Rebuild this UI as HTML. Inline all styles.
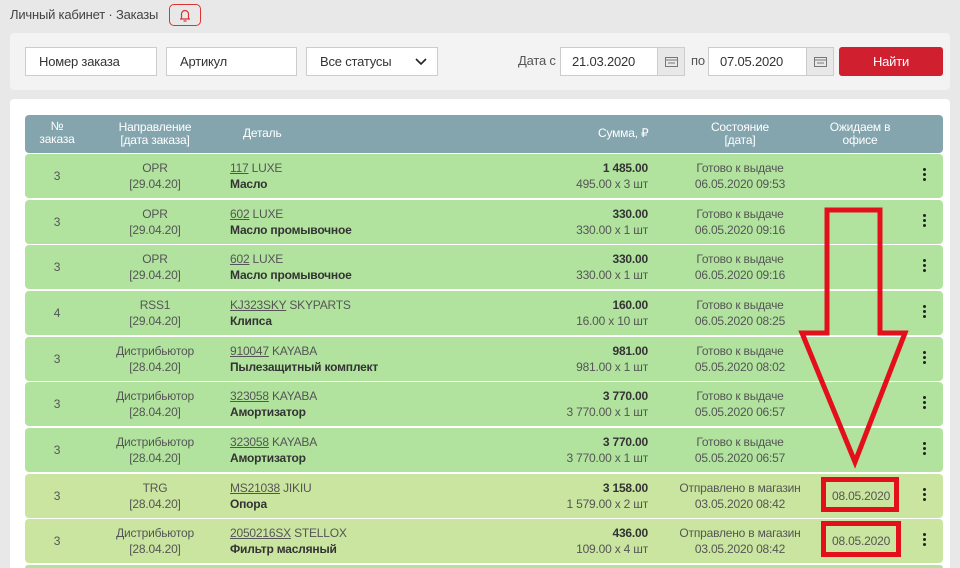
<!DOCTYPE html><html><head><meta charset="utf-8"><style>
*{box-sizing:border-box;margin:0;padding:0}
html{width:960px;height:568px;overflow:hidden}
body{width:960px;height:568px;overflow:hidden;background:#e8e8e8;font-family:"Liberation Sans",sans-serif;color:#444;font-size:12px;position:relative;letter-spacing:-0.2px}
.abs{position:absolute}
.inp{position:absolute;top:47px;height:29px;background:#fff;border:1px solid #ccc;font-size:13px;line-height:27px;padding-left:13px;color:#333}
.row{position:absolute;left:25px;width:918px;height:44px;background:#b1e39f;border-radius:4px}
.row.y{background:#c9e59f}
.row div{position:absolute;line-height:16px;font-size:12px;color:#555}
.c1{left:0;width:64px;text-align:center;top:14px}
.c2{left:70px;width:120px;text-align:center;top:6px}
.c3{left:205px;top:6px}
.c3 b{color:#333}
.c3 u{color:#555}
.c4{right:295px;top:6px;text-align:right}
.c4 b{color:#333}
.c5{left:640px;width:150px;text-align:center;top:6px}
.dots{left:898px;top:14px;width:4px}
.dots i{display:block;width:3px;height:3px;background:#222;border-radius:50%;margin-bottom:2px}
.hd{position:absolute;color:#fff;font-size:12px;line-height:13px;text-align:center}
</style></head><body>
<div class="abs" style="left:10px;top:7px;font-size:13px;color:#444">Личный кабинет · Заказы</div>
<div class="abs" style="left:169px;top:4px;width:32px;height:22px;border:1px solid #d33;border-radius:5px"><svg width="30" height="20" viewBox="0 0 30 20"><path d="M10 14h10M11.5 14V9a3.5 3.5 0 0 1 7 0v5M13.5 16h3" fill="none" stroke="#d33" stroke-width="1.2"/></svg></div>
<div class="abs" style="left:10px;top:33px;width:940px;height:57px;background:#f3f3f3;border-radius:4px"></div>
<div class="inp" style="left:25px;width:132px">Номер заказа</div>
<div class="inp" style="left:166px;width:131px">Артикул</div>
<div class="inp" style="left:306px;width:132px">Все статусы<svg class="abs" style="left:108px;top:10px" width="12" height="8"><path d="M1 1l5 5 5-5" fill="none" stroke="#222" stroke-width="1.6"/></svg></div>
<div class="abs" style="left:518px;top:53px;font-size:13px;color:#555">Дата с</div>
<div class="inp" style="left:560px;width:125px;padding-left:11px">21.03.2020</div>
<div class="abs" style="left:657px;top:47px;width:28px;height:29px;background:#e8e8e8;border:1px solid #ccc"><svg style="margin:9px 7px" width="13" height="10"><rect x=".5" y=".5" width="12" height="9" fill="none" stroke="#777"/><path d="M1 3h11M3 6h7" stroke="#777"/></svg></div>
<div class="abs" style="left:691px;top:53px;font-size:13px;color:#555">по</div>
<div class="inp" style="left:708px;width:126px;padding-left:11px">07.05.2020</div>
<div class="abs" style="left:806px;top:47px;width:28px;height:29px;background:#e8e8e8;border:1px solid #ccc"><svg style="margin:9px 7px" width="13" height="10"><rect x=".5" y=".5" width="12" height="9" fill="none" stroke="#777"/><path d="M1 3h11M3 6h7" stroke="#777"/></svg></div>
<div class="abs" style="left:839px;top:47px;width:104px;height:29px;background:#d0202f;border-radius:3px;color:#fff;font-size:13px;text-align:center;line-height:29px">Найти</div>
<div class="abs" style="left:10px;top:99px;width:940px;height:469px;background:#fff;border-radius:4px 4px 0 0"></div>
<div class="abs" style="left:25px;top:115px;width:918px;height:38px;background:#84a5ae;border-radius:4px"></div>
<div class="hd" style="left:25px;width:64px;top:120px">№<br>заказа</div>
<div class="hd" style="left:95px;width:120px;top:121px">Направление<br>[дата заказа]</div>
<div class="hd" style="left:243px;top:127px">Деталь</div>
<div class="hd" style="left:598px;top:127px">Сумма, ₽</div>
<div class="hd" style="left:680px;width:120px;top:121px">Состояние<br>[дата]</div>
<div class="hd" style="left:810px;width:100px;top:121px">Ожидаем в<br>офисе</div>

<div class="row" style="top:154px"><div class="c1">3</div><div class="c2">OPR<br>[29.04.20]</div><div class="c3"><u>117</u> LUXE<br><b>Масло</b></div><div class="c4"><b>1 485.00</b><br>495.00 x 3 шт</div><div class="c5">Готово к выдаче<br>06.05.2020 09:53</div><div class="dots"><i></i><i></i><i></i></div></div>
<div class="row" style="top:200px"><div class="c1">3</div><div class="c2">OPR<br>[29.04.20]</div><div class="c3"><u>602</u> LUXE<br><b>Масло промывочное</b></div><div class="c4"><b>330.00</b><br>330.00 x 1 шт</div><div class="c5">Готово к выдаче<br>06.05.2020 09:16</div><div class="dots"><i></i><i></i><i></i></div></div>
<div class="row" style="top:245px"><div class="c1">3</div><div class="c2">OPR<br>[29.04.20]</div><div class="c3"><u>602</u> LUXE<br><b>Масло промывочное</b></div><div class="c4"><b>330.00</b><br>330.00 x 1 шт</div><div class="c5">Готово к выдаче<br>06.05.2020 09:16</div><div class="dots"><i></i><i></i><i></i></div></div>
<div class="row" style="top:291px"><div class="c1">4</div><div class="c2">RSS1<br>[29.04.20]</div><div class="c3"><u>KJ323SKY</u> SKYPARTS<br><b>Клипса</b></div><div class="c4"><b>160.00</b><br>16.00 x 10 шт</div><div class="c5">Готово к выдаче<br>06.05.2020 08:25</div><div class="dots"><i></i><i></i><i></i></div></div>
<div class="row" style="top:337px"><div class="c1">3</div><div class="c2">Дистрибьютор<br>[28.04.20]</div><div class="c3"><u>910047</u> KAYABA<br><b>Пылезащитный комплект</b></div><div class="c4"><b>981.00</b><br>981.00 x 1 шт</div><div class="c5">Готово к выдаче<br>05.05.2020 08:02</div><div class="dots"><i></i><i></i><i></i></div></div>
<div class="row" style="top:382px"><div class="c1">3</div><div class="c2">Дистрибьютор<br>[28.04.20]</div><div class="c3"><u>323058</u> KAYABA<br><b>Амортизатор</b></div><div class="c4"><b>3 770.00</b><br>3 770.00 x 1 шт</div><div class="c5">Готово к выдаче<br>05.05.2020 06:57</div><div class="dots"><i></i><i></i><i></i></div></div>
<div class="row" style="top:428px"><div class="c1">3</div><div class="c2">Дистрибьютор<br>[28.04.20]</div><div class="c3"><u>323058</u> KAYABA<br><b>Амортизатор</b></div><div class="c4"><b>3 770.00</b><br>3 770.00 x 1 шт</div><div class="c5">Готово к выдаче<br>05.05.2020 06:57</div><div class="dots"><i></i><i></i><i></i></div></div>
<div class="row y" style="top:474px"><div class="c1">3</div><div class="c2">TRG<br>[28.04.20]</div><div class="c3"><u>MS21038</u> JIKIU<br><b>Опора</b></div><div class="c4"><b>3 158.00</b><br>1 579.00 x 2 шт</div><div class="c5">Отправлено в магазин<br>03.05.2020 08:42</div><div style="left:807px;top:14px">08.05.2020</div><div class="dots"><i></i><i></i><i></i></div></div>
<div class="row y" style="top:519px"><div class="c1">3</div><div class="c2">Дистрибьютор<br>[28.04.20]</div><div class="c3"><u>2050216SX</u> STELLOX<br><b>Фильтр масляный</b></div><div class="c4"><b>436.00</b><br>109.00 x 4 шт</div><div class="c5">Отправлено в магазин<br>03.05.2020 08:42</div><div style="left:807px;top:14px">08.05.2020</div><div class="dots"><i></i><i></i><i></i></div></div>
<div class="row" style="top:565px;height:3px;border-radius:4px 4px 0 0"></div>

<svg class="abs" style="left:0;top:0" width="960" height="568">
<path d="M827 210H880V333H905L855 462L802 333H827Z" fill="none" stroke="#e3101c" stroke-width="5" stroke-linejoin="miter"/>
<rect x="823.5" y="479.5" width="73" height="30" fill="none" stroke="#e3101c" stroke-width="5"/>
<rect x="823.5" y="523.5" width="75" height="31" fill="none" stroke="#e3101c" stroke-width="5"/>
</svg>
</body></html>
